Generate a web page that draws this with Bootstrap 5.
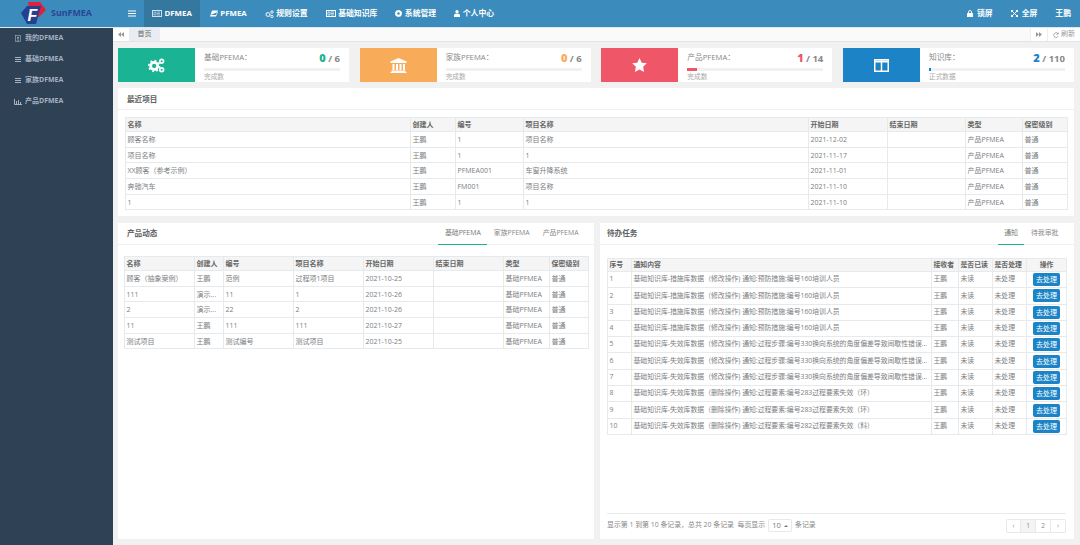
<!DOCTYPE html>
<html lang="zh-CN">
<head>
<meta charset="utf-8">
<title>SunFMEA</title>
<link rel="stylesheet" href="https://cdn.jsdelivr.net/npm/bootstrap@5.3.0/dist/css/bootstrap.min.css">
<style>
html,body{height:545px;overflow:hidden}
body{font-family:"Open Sans","Noto Sans CJK SC",sans-serif;font-size:7px;color:#676a6c;background:#f1f1f1;line-height:1.2}
svg{display:block;flex:none}
.topbar{height:28px;background:#3b8cbc;color:#fff;font-weight:700;font-size:7.85px;border-bottom:1px solid #dfe6ee}
.brand{width:113px;padding-left:21px;gap:5px}
.brand-name{color:#2a4597;font-size:8.9px;font-weight:700}
.burger{width:31px;padding-left:15px}
.topitem{height:100%;padding:0 9px;gap:2.5px;white-space:nowrap}
.topitem.on{background:#35789f;padding:0 8px;margin-right:1px}
.topright{margin-left:auto;padding-right:9px;gap:18px}
.shell{height:517px}
.sidebar{width:113px;background:#2f4154;color:#a7b1c2;font-weight:700;font-size:7px;flex:none}
.sideitem{height:21px;padding-left:15px;gap:4px;white-space:nowrap}
.sideitem.wide{padding-left:14px;gap:3px}
.mainbox{min-width:0}
.tabbar{height:14px;background:#fafafa;border-bottom:1px solid #e4e4e4;color:#777}
.tabbtn{width:16px;height:100%;background:#fff;color:#999}
.tabactive{width:31px;height:100%;background:#e9edf3;color:#666}
.tabend{margin-left:auto}
.tabfwd{width:17px;height:100%;background:#fff;border-left:1px solid #eee;color:#999}
.tabref{width:33px;height:100%;background:#fff;border-left:1px solid #eee;color:#999;gap:2px}
.pagepad{padding:6px 6px 5px 5px;gap:6px;height:calc(100% - 14px)}
.statrow{gap:0;height:34px;justify-content:space-between}
.statbox{width:231px;background:#fff;height:34px}
.staticon{width:77px;height:34px;color:#fff}
.bg-s1{background:#1ab394}.bg-s2{background:#f8ac59}.bg-s3{background:#ef5667}.bg-s4{background:#1c84c6}
.statbody{padding:0 9px 0 9px;min-width:0}
.stattop{height:20px;color:#888;font-size:7.7px}
.statnum{font-size:9.500px;font-weight:700;color:#888}
.statnum b{font-size:11px}
.c1{color:#1ab394}.c2{color:#f8ac59}.c3{color:#ef5667}.c4{color:#1c84c6}
.statbar{height:3px;background:#f1f1f1;margin-bottom:2px}
.statbar div{height:3px}
.statsub{font-size:6.7px;color:#aaa}
.panelbox{background:#fff;border:0;border-radius:0}
.panelhead{height:22px;padding:2px 9px 0;border-bottom:1px solid #eef0f2;color:#5f6163;font-size:7.6px;font-weight:600}
.panelhead.tabbed{padding-top:0}
.recent{height:128px}
.recent-wrap{padding:7px 6px 0 7px}
.left-wrap{padding:11px 6px 0}
.right-wrap{padding:13px 8px 0 7px}
.lowrow{gap:6px;height:316px;margin-top:1px}
.lowleft{width:476px}
.lowright{width:474px}
.lowright .panelhead{padding-left:7px}
.subtabs{height:100%;gap:0;font-weight:400;font-size:6.9px;color:#888}
.subtab{height:100%;padding:0 6.500px;margin-bottom:-1px;border-bottom:1px solid transparent}
.subtab.on{border-bottom-color:#1ab394;color:#777}
.grid{table-layout:fixed;margin:0;--bs-table-color:#7b7d7f;--bs-table-border-color:#e7eaec;font-size:7px;line-height:1}
.grid>:not(caption)>*>*{padding:0 1.500px;vertical-align:middle;color:#7b7d7f;white-space:nowrap;overflow:hidden;height:15.7px}
.grid thead th{background:#f5f5f5;color:#666;font-weight:600;height:14px;border-bottom-width:1px}
.grid-a{width:942px}
.grid-a col:nth-child(1){width:285px}.grid-a col:nth-child(2){width:45px}.grid-a col:nth-child(3){width:68px}.grid-a col:nth-child(4){width:285px}.grid-a col:nth-child(5){width:79px}.grid-a col:nth-child(6){width:78px}.grid-a col:nth-child(7){width:57px}.grid-a col:nth-child(8){width:45px}
.grid-b{width:464px}
.grid-b col:nth-child(1){width:70px}.grid-b col:nth-child(2){width:29px}.grid-b col:nth-child(3){width:70px}.grid-b col:nth-child(4){width:70px}.grid-b col:nth-child(5){width:70px}.grid-b col:nth-child(6){width:70px}.grid-b col:nth-child(7){width:46px}.grid-b col:nth-child(8){width:39px}
.grid-c{width:459px;font-size:6.850px}
.grid-c col:nth-child(1){width:24px}.grid-c col:nth-child(2){width:300px}.grid-c col:nth-child(3){width:27px}.grid-c col:nth-child(4){width:34px}.grid-c col:nth-child(5){width:34px}.grid-c col:nth-child(6){width:40px}
.grid-c>:not(caption)>*>*{height:16.3px}
.grid-c thead th{height:13px}
.gobtn{--bs-btn-padding-y:0;--bs-btn-padding-x:0;--bs-btn-font-size:7px;--bs-btn-bg:#1c84c6;--bs-btn-border-color:#1c84c6;--bs-btn-color:#fff;--bs-btn-border-radius:1.500px;width:27px;height:13px;line-height:12px;display:block;margin:0 auto;color:#fff!important}
.foot{margin:auto 8px 0 7px;height:26px;border-top:1px solid #e7eaec;color:#888;gap:3px;font-size:6.900px;padding-bottom:2px}
.sizepick{width:24px;height:13px;border:1px solid #e7eaec;border-radius:2px;color:#777;font-size:7.500px;gap:3px}
.pager{margin:0 0 0 auto;--bs-pagination-padding-x:0;--bs-pagination-padding-y:0;--bs-pagination-font-size:6.500px;--bs-pagination-color:#888;--bs-pagination-border-color:#e7eaec;--bs-pagination-border-radius:2px}
.pager .page-link{width:16px;height:14px;line-height:12px;text-align:center;color:#888}
.pager .page-item.active .page-link{background:#f4f4f4;border-color:#e7eaec;color:#888}
.pager .page-item:first-child .page-link{width:15px}
.pager .page-item:last-child .page-link{width:16px}
.pbar-3{width:7.100%}.pbar-4{width:1.800%}
</style>
</head>
<body>
<nav class="topbar d-flex align-items-center">
  <div class="brand d-flex align-items-center">
    <svg width="25" height="23" viewBox="0 0 25 23"><polygon points="7,0 19,0 25,8 18,15 15,15 18,7 8,6" fill="#e0213a"/><polygon points="0,11 6,4 20,4 15,22 6,22" fill="#24408f"/><text x="6.500" y="19" font-family="Liberation Sans,sans-serif" font-size="16" font-weight="700" font-style="italic" fill="#fff">F</text></svg>
    <span class="brand-name">SunFMEA</span>
  </div>
  <div class="burger"><svg width="8" height="7" viewBox="0 0 8 7"><path d="M0 1h8M0 3.500h8M0 6h8" stroke="#fff" stroke-width="1.200"/></svg></div>
  <div class="topitem on d-flex align-items-center"><svg width="10" height="7" viewBox="0 0 10 7"><rect x=".5" y=".5" width="9" height="6" fill="none" stroke="#cfe0ec"/><path d="M2 2h2v3H2zM5 2h3M5 3.500h3M5 5h3" stroke="#cfe0ec" stroke-width=".7" fill="none"/></svg>DFMEA</div>
  <div class="topitem d-flex align-items-center"><svg width="8" height="7" viewBox="0 0 8 7"><path d="M2 .5h6L6 5H.5zM.5 5 0 6.500h6L8 2" fill="#fff"/></svg>PFMEA</div>
  <div class="topitem d-flex align-items-center"><svg width="9" height="8" viewBox="0 0 18 16"><circle cx="6" cy="9" r="3.800" fill="none" stroke="#fff" stroke-width="2.600" stroke-dasharray="2 .8"/><circle cx="14" cy="4" r="2.400" fill="none" stroke="#fff" stroke-width="1.800"/><circle cx="14" cy="13" r="2.400" fill="none" stroke="#fff" stroke-width="1.800"/></svg>规则设置</div>
  <div class="topitem d-flex align-items-center"><svg width="10" height="7" viewBox="0 0 10 7"><rect x=".5" y=".5" width="9" height="6" fill="none" stroke="#fff"/><path d="M2 2h2v3H2zM5 2h3M5 3.500h3M5 5h3" stroke="#fff" stroke-width=".7" fill="none"/></svg>基础知识库</div>
  <div class="topitem d-flex align-items-center"><svg width="7" height="7" viewBox="0 0 14 14"><circle cx="7" cy="7" r="4.600" fill="none" stroke="#fff" stroke-width="4"/><circle cx="7" cy="7" r="6.400" fill="none" stroke="#fff" stroke-width="1.600" stroke-dasharray="2.500 2.500"/></svg>系统管理</div>
  <div class="topitem d-flex align-items-center"><svg width="6" height="7" viewBox="0 0 12 14"><circle cx="6" cy="3.500" r="3.300" fill="#fff"/><path d="M0 14V10.500Q0 7.500 3 7.500H9Q12 7.500 12 10.500V14z" fill="#fff"/></svg>个人中心</div>
  <div class="topright d-flex align-items-center">
    <span class="d-flex align-items-center gap-1"><svg width="6" height="7" viewBox="0 0 12 14"><rect y="6" width="12" height="8" rx="1" fill="#fff"/><path d="M3 6V4a3 3 0 0 1 6 0v2" fill="none" stroke="#fff" stroke-width="1.800"/></svg>锁屏</span>
    <span class="d-flex align-items-center gap-1"><svg width="7" height="7" viewBox="0 0 14 14"><path d="M1 1l12 12M13 1 1 13" stroke="#fff" stroke-width="2"/><path d="M0 0h5L0 5zM14 0H9l5 5zM0 14h5l-5-5zM14 14H9l5-5z" fill="#fff"/></svg>全屏</span>
    <span>王鹏</span>
  </div>
</nav>
<div class="shell d-flex">
  <aside class="sidebar">
    <div class="sideitem d-flex align-items-center"><svg width="6" height="7" viewBox="0 0 12 14"><rect x=".7" y=".7" width="10.600" height="12.600" fill="none" stroke="#a7b1c2" stroke-width="1.200"/><circle cx="6" cy="5.500" r="2" fill="#a7b1c2"/><path d="M3 11q3-4 6 0z" fill="#a7b1c2"/></svg>我的DFMEA</div>
    <div class="sideitem d-flex align-items-center"><svg width="6" height="5" viewBox="0 0 6 5"><path d="M0 .5h6M0 2.500h6M0 4.500h6" stroke="#a7b1c2"/></svg>基础DFMEA</div>
    <div class="sideitem d-flex align-items-center"><svg width="6" height="5" viewBox="0 0 6 5"><path d="M0 .5h6M0 2.500h6M0 4.500h6" stroke="#a7b1c2"/></svg>家族DFMEA</div>
    <div class="sideitem wide d-flex align-items-center"><svg width="8" height="6" viewBox="0 0 8 6"><path d="M.5 0v5.500H8" stroke="#a7b1c2" fill="none"/><path d="M2 2h1v3H2zM4 1h1v4H4zM6 3h1v2H6z" fill="#a7b1c2"/></svg>产品DFMEA</div>
  </aside>
  <main class="mainbox flex-grow-1 d-flex flex-column">
    <div class="tabbar d-flex align-items-center">
      <div class="tabbtn d-flex align-items-center justify-content-center"><svg width="6" height="5" viewBox="0 0 6 5"><path d="M3 0v5L0 2.500zM6 0v5L3 2.500z" fill="#999"/></svg></div>
      <div class="tabactive d-flex align-items-center justify-content-center">首页</div>
      <div class="tabend d-flex align-items-center h-100">
        <div class="tabfwd d-flex align-items-center justify-content-center"><svg width="6" height="5" viewBox="0 0 6 5"><path d="M0 0v5l3-2.500zM3 0v5l3-2.500z" fill="#999"/></svg></div>
        <div class="tabref d-flex align-items-center justify-content-center"><svg width="6" height="6" viewBox="0 0 12 12"><path d="M10 3.500A4.700 4.700 0 1 0 10.500 8" fill="none" stroke="#999" stroke-width="1.600"/><path d="M11 0v5H6z" fill="#999"/></svg>刷新</div>
      </div>
    </div>
    <div class="pagepad d-flex flex-column">
      <div class="statrow d-flex">
        <div class="statbox d-flex"><div class="staticon bg-s1 d-flex align-items-center justify-content-center"><svg width="17" height="15" viewBox="0 0 18 16"><circle cx="6.500" cy="8.500" r="3.800" fill="none" stroke="#fff" stroke-width="3"/><circle cx="6.500" cy="8.500" r="5.800" fill="none" stroke="#fff" stroke-width="1.600" stroke-dasharray="2 2.500"/><circle cx="14.500" cy="3.500" r="2" fill="none" stroke="#fff" stroke-width="1.800"/><circle cx="14.500" cy="12.500" r="2" fill="none" stroke="#fff" stroke-width="1.800"/></svg></div><div class="statbody flex-grow-1"><div class="stattop d-flex justify-content-between align-items-center"><span>基础PFEMA：</span><span class="statnum"><b class="c1">0</b> / 6</span></div><div class="statbar"></div><div class="statsub">完成数</div></div></div>
        <div class="statbox d-flex"><div class="staticon bg-s2 d-flex align-items-center justify-content-center"><svg width="17" height="15" viewBox="0 0 17 15"><path d="M8.500 0 16.500 3.500V5H.5V3.500z" fill="#fff"/><path d="M2.500 6h2v6h-2zM6 6h2v6H6zM9.500 6h2v6h-2zM13 6h2v6h-2zM1.500 12.500h14V14h-14zM.5 14h16v1H.5z" fill="#fff"/></svg></div><div class="statbody flex-grow-1"><div class="stattop d-flex justify-content-between align-items-center"><span>家族PFEMA：</span><span class="statnum"><b class="c2">0</b> / 6</span></div><div class="statbar"></div><div class="statsub">完成数</div></div></div>
        <div class="statbox d-flex"><div class="staticon bg-s3 d-flex align-items-center justify-content-center"><svg width="15" height="14" viewBox="0 0 24 23"><path d="M12 0l3.700 7.600 8.300 1.100-6 5.800 1.500 8.300L12 18.900 4.500 22.800 6 14.500 0 8.700l8.300-1.100z" fill="#fff"/></svg></div><div class="statbody flex-grow-1"><div class="stattop d-flex justify-content-between align-items-center"><span>产品PFEMA：</span><span class="statnum"><b class="c3">1</b> / 14</span></div><div class="statbar"><div class="bg-s3 pbar-3"></div></div><div class="statsub">完成数</div></div></div>
        <div class="statbox d-flex"><div class="staticon bg-s4 d-flex align-items-center justify-content-center"><svg width="15" height="13" viewBox="0 0 15 13"><rect x=".75" y=".75" width="13.500" height="11.500" fill="none" stroke="#fff" stroke-width="1.500"/><path d="M.75 2.500h13.500" stroke="#fff" stroke-width="2"/><path d="M7.500 1v11" stroke="#fff" stroke-width="1.500"/></svg></div><div class="statbody flex-grow-1"><div class="stattop d-flex justify-content-between align-items-center"><span>知识库：</span><span class="statnum"><b class="c4">2</b> / 110</span></div><div class="statbar"><div class="bg-s4 pbar-4"></div></div><div class="statsub">正式数据</div></div></div>
      </div>
      <section class="panelbox recent">
        <div class="panelhead d-flex align-items-center">最近项目</div>
        <div class="recent-wrap">
          <table class="table table-bordered grid grid-a">
            <colgroup><col><col><col><col><col><col><col><col></colgroup>
            <thead><tr><th>名称</th><th>创建人</th><th>编号</th><th>项目名称</th><th>开始日期</th><th>结束日期</th><th>类型</th><th>保密级别</th></tr></thead>
            <tbody>
              <tr><td>顾客名称</td><td>王鹏</td><td>1</td><td>项目名称</td><td>2021-12-02</td><td></td><td>产品PFMEA</td><td>普通</td></tr>
              <tr><td>项目名称</td><td>王鹏</td><td>1</td><td>1</td><td>2021-11-17</td><td></td><td>产品PFMEA</td><td>普通</td></tr>
              <tr><td>XX顾客（参考示例）</td><td>王鹏</td><td>PFMEA001</td><td>车窗升降系统</td><td>2021-11-01</td><td></td><td>产品PFMEA</td><td>普通</td></tr>
              <tr><td>奔驰汽车</td><td>王鹏</td><td>FM001</td><td>项目名称</td><td>2021-11-10</td><td></td><td>产品PFMEA</td><td>普通</td></tr>
              <tr><td>1</td><td>王鹏</td><td>1</td><td>1</td><td>2021-11-10</td><td></td><td>产品PFMEA</td><td>普通</td></tr>
            </tbody>
          </table>
        </div>
      </section>
      <div class="lowrow d-flex">
        <section class="panelbox lowleft">
          <div class="panelhead tabbed d-flex align-items-center justify-content-between"><span>产品动态</span>
            <div class="subtabs d-flex align-items-center"><span class="subtab on d-flex align-items-center">基础PFEMA</span><span class="subtab d-flex align-items-center">家族PFEMA</span><span class="subtab d-flex align-items-center">产品PFEMA</span></div></div>
          <div class="left-wrap">
            <table class="table table-bordered grid grid-b">
              <colgroup><col><col><col><col><col><col><col><col></colgroup>
              <thead><tr><th>名称</th><th>创建人</th><th>编号</th><th>项目名称</th><th>开始日期</th><th>结束日期</th><th>类型</th><th>保密级别</th></tr></thead>
              <tbody>
                <tr><td>顾客（抽象案例）</td><td>王鹏</td><td>范例</td><td>过程项1项目</td><td>2021-10-25</td><td></td><td>基础PFMEA</td><td>普通</td></tr>
                <tr><td>111</td><td>演示...</td><td>11</td><td>1</td><td>2021-10-26</td><td></td><td>基础PFMEA</td><td>普通</td></tr>
                <tr><td>2</td><td>演示...</td><td>22</td><td>2</td><td>2021-10-26</td><td></td><td>基础PFMEA</td><td>普通</td></tr>
                <tr><td>11</td><td>王鹏</td><td>111</td><td>111</td><td>2021-10-27</td><td></td><td>基础PFMEA</td><td>普通</td></tr>
                <tr><td>测试项目</td><td>王鹏</td><td>测试编号</td><td>测试项目</td><td>2021-10-25</td><td></td><td>基础PFMEA</td><td>普通</td></tr>
              </tbody>
            </table>
          </div>
        </section>
        <section class="panelbox lowright d-flex flex-column">
          <div class="panelhead tabbed d-flex align-items-center justify-content-between"><span>待办任务</span>
            <div class="subtabs d-flex align-items-center"><span class="subtab on d-flex align-items-center">通知</span><span class="subtab d-flex align-items-center">待我审批</span></div></div>
          <div class="right-wrap">
            <table class="table table-bordered grid grid-c">
              <colgroup><col><col><col><col><col><col></colgroup>
              <thead><tr><th>序号</th><th>通知内容</th><th>接收者</th><th>是否已读</th><th>是否处理</th><th class="text-center">操作</th></tr></thead>
              <tbody>
                <tr><td>1</td><td>基础知识库-措施库数据（修改操作) 通知:预防措施:编号160培训人员</td><td>王鹏</td><td>未读</td><td>未处理</td><td><a class="btn gobtn">去处理</a></td></tr>
                <tr><td>2</td><td>基础知识库-措施库数据（修改操作) 通知:预防措施:编号160培训人员</td><td>王鹏</td><td>未读</td><td>未处理</td><td><a class="btn gobtn">去处理</a></td></tr>
                <tr><td>3</td><td>基础知识库-措施库数据（修改操作) 通知:预防措施:编号160培训人员</td><td>王鹏</td><td>未读</td><td>未处理</td><td><a class="btn gobtn">去处理</a></td></tr>
                <tr><td>4</td><td>基础知识库-措施库数据（修改操作) 通知:预防措施:编号160培训人员</td><td>王鹏</td><td>未读</td><td>未处理</td><td><a class="btn gobtn">去处理</a></td></tr>
                <tr><td>5</td><td>基础知识库-失效库数据（修改操作) 通知:过程步骤:编号330换向系统的角度偏差导致间歇性错误...</td><td>王鹏</td><td>未读</td><td>未处理</td><td><a class="btn gobtn">去处理</a></td></tr>
                <tr><td>6</td><td>基础知识库-失效库数据（修改操作) 通知:过程步骤:编号330换向系统的角度偏差导致间歇性错误...</td><td>王鹏</td><td>未读</td><td>未处理</td><td><a class="btn gobtn">去处理</a></td></tr>
                <tr><td>7</td><td>基础知识库-失效库数据（修改操作) 通知:过程步骤:编号330换向系统的角度偏差导致间歇性错误...</td><td>王鹏</td><td>未读</td><td>未处理</td><td><a class="btn gobtn">去处理</a></td></tr>
                <tr><td>8</td><td>基础知识库-失效库数据（删除操作) 通知:过程要素:编号283过程要素失效（环）</td><td>王鹏</td><td>未读</td><td>未处理</td><td><a class="btn gobtn">去处理</a></td></tr>
                <tr><td>9</td><td>基础知识库-失效库数据（删除操作) 通知:过程要素:编号283过程要素失效（环）</td><td>王鹏</td><td>未读</td><td>未处理</td><td><a class="btn gobtn">去处理</a></td></tr>
                <tr><td>10</td><td>基础知识库-失效库数据（删除操作) 通知:过程要素:编号282过程要素失效（料）</td><td>王鹏</td><td>未读</td><td>未处理</td><td><a class="btn gobtn">去处理</a></td></tr>
              </tbody>
            </table>
          </div>
          <div class="foot d-flex align-items-center"><span>显示第 1 到第 10 条记录，总共 20 条记录&nbsp; 每页显示</span><span class="sizepick d-flex align-items-center justify-content-center">10<svg width="4" height="2" viewBox="0 0 4 2"><path d="M0 2 2 0l2 2z" fill="#777"/></svg></span><span>条记录</span>
            <ul class="pagination pager"><li class="page-item"><a class="page-link">‹</a></li><li class="page-item active"><a class="page-link">1</a></li><li class="page-item"><a class="page-link">2</a></li><li class="page-item"><a class="page-link">›</a></li></ul></div>
        </section>
      </div>
    </div>
  </main>
</div>
<script src="https://cdn.jsdelivr.net/npm/bootstrap@5.3.0/dist/js/bootstrap.bundle.min.js"></script>
</body>
</html>
